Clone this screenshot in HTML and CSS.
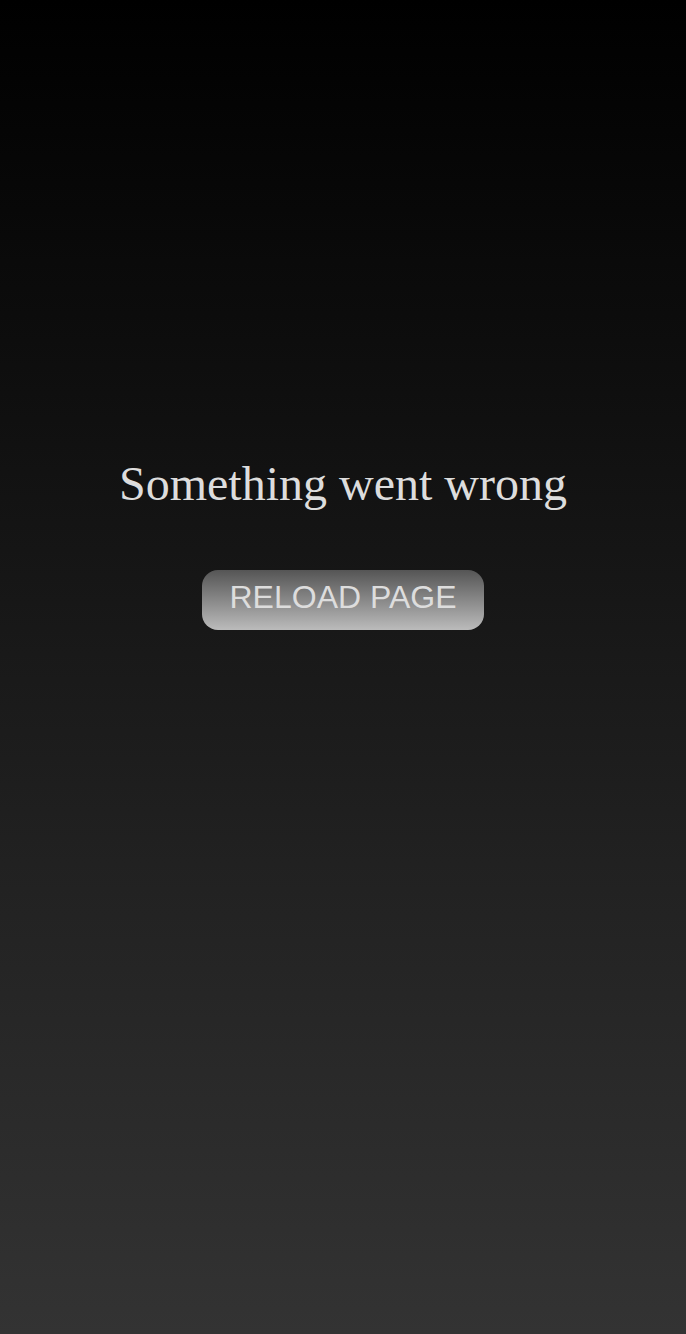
FILE: index.html
```html
<!DOCTYPE html>
<html>
<head>
<meta charset="utf-8">
<link rel="stylesheet" href="styles.css">
</head>
<body>
<main class="page">
  <h1 class="title">Something went wrong</h1>
  <button class="reload">RELOAD PAGE</button>
</main>
</body>
</html>
```

FILE: styles.css
```css
html, body {
  margin: 0;
  padding: 0;
}
body {
  min-height: 1334px;
  background: linear-gradient(to bottom, #000000 0%, #333333 100%);
}
.page {
  display: flex;
  flex-direction: column;
  align-items: center;
  padding-top: 456px;
}
.title {
  margin: 0;
  font-family: "Liberation Serif", "Times New Roman", serif;
  font-weight: normal;
  font-size: 48px;
  line-height: 55px;
  color: #dddddd;
}
.reload {
  margin-top: 59px;
  width: 282px;
  height: 60px;
  box-sizing: border-box;
  padding: 9px 0 15px;
  border: none;
  border-radius: 16px;
  background: linear-gradient(to bottom, #555555 0%, #bbbbbb 100%);
  font-family: "Liberation Sans", Arial, sans-serif;
  font-size: 32px;
  line-height: 36px;
  color: #dddddd;
}
```
